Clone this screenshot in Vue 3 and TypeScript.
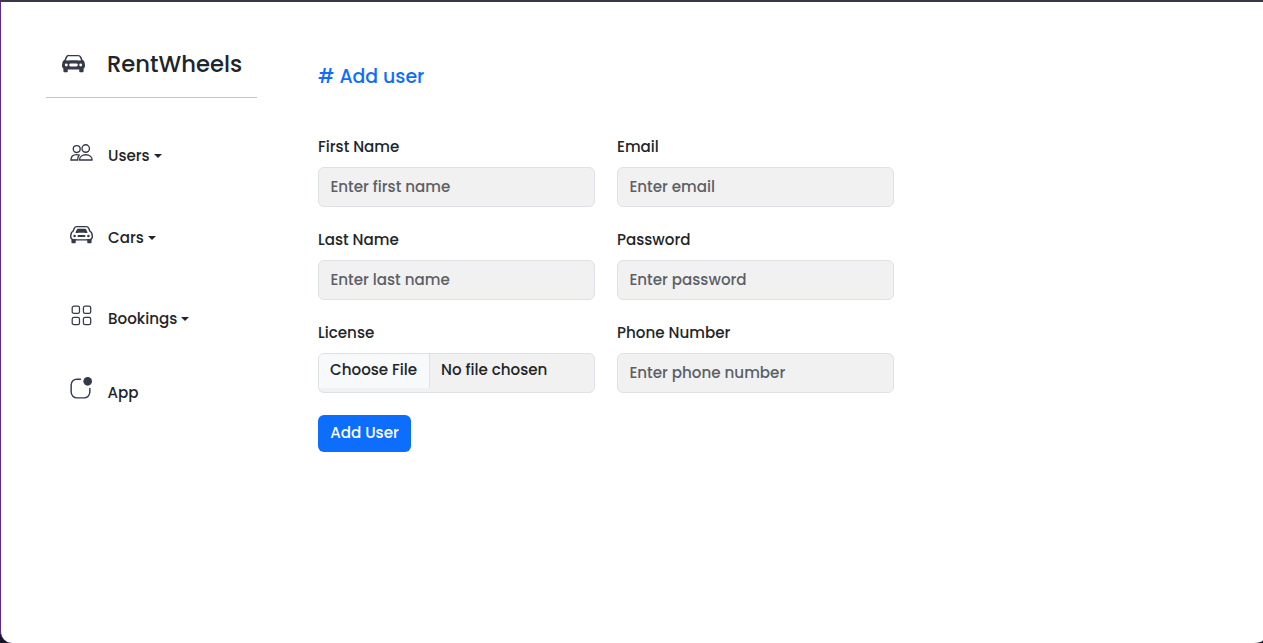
<script setup lang="ts">
import { ref } from 'vue'

interface NavItem {
  id: string
  label: string
  menu: boolean
}

interface Field {
  id: string
  label: string
  type: 'text' | 'email' | 'password' | 'file' | 'tel'
  placeholder: string
}

const navItems: NavItem[] = [
  { id: 'users', label: 'Users', menu: true },
  { id: 'cars', label: 'Cars', menu: true },
  { id: 'bookings', label: 'Bookings', menu: true },
  { id: 'app', label: 'App', menu: false },
]

const fields: Field[] = [
  { id: 'first', label: 'First Name', type: 'text', placeholder: 'Enter first name' },
  { id: 'email', label: 'Email', type: 'email', placeholder: 'Enter email' },
  { id: 'last', label: 'Last Name', type: 'text', placeholder: 'Enter last name' },
  { id: 'password', label: 'Password', type: 'password', placeholder: 'Enter password' },
  { id: 'license', label: 'License', type: 'file', placeholder: '' },
  { id: 'phone', label: 'Phone Number', type: 'tel', placeholder: 'Enter phone number' },
]

const values = ref<Record<string, string>>({})
</script>

<template>
  <div class="backdrop">
    <div class="window">
      <aside class="sidebar">
        <header class="brand">
          <svg class="brand-icon" viewBox="0 0 16 16" fill="currentColor">
            <path fill-rule="evenodd" d="M2.52 3.515A2.5 2.5 0 0 1 4.82 2h6.362c1 0 1.904.596 2.298 1.515l.792 1.848c.075.175.21.319.38.404.5.25.855.715.965 1.262l.335 1.679q.05.242.049.49v.413c0 .814-.39 1.543-1 1.997V13.5a.5.5 0 0 1-.5.5h-2a.5.5 0 0 1-.5-.5v-1.338c-1.292.048-2.745.088-4 .088s-2.708-.04-4-.088V13.5a.5.5 0 0 1-.5.5h-2a.5.5 0 0 1-.5-.5v-1.892c-.61-.454-1-1.183-1-1.997v-.413a2.5 2.5 0 0 1 .049-.49l.335-1.68c.11-.546.465-1.012.964-1.261a.8.8 0 0 0 .381-.404l.792-1.848ZM3 10a1 1 0 1 0 0-2 1 1 0 0 0 0 2m10 0a1 1 0 1 0 0-2 1 1 0 0 0 0 2M6 8a1 1 0 0 0 0 2h4a1 1 0 1 0 0-2zM2.906 5.189a.51.51 0 0 0 .497.731c.91-.073 3.35-.17 4.597-.17s3.688.097 4.597.17a.51.51 0 0 0 .497-.731l-.956-1.913A.5.5 0 0 0 11.691 3H4.309a.5.5 0 0 0-.447.276z" />
          </svg>
          <span class="brand-name">RentWheels</span>
        </header>
        <nav class="nav">
          <a v-for="item in navItems" :key="item.id" class="nav-item" :class="item.id">
            <svg v-if="item.id === 'users'" class="nav-icon" viewBox="0 0 24 24" fill="none" stroke="currentColor" stroke-width="1.4">
              <circle cx="7" cy="7.4" r="3.6" />
              <circle cx="16.4" cy="6.8" r="3.9" />
              <path d="M8 18.8H1c0-3.6 2.2-5.7 5.8-5.7 1 0 2 .2 2.8.5C8.5 15 8 16.6 8 18.8z" />
              <path d="M9.9 18.8c0-3.3 2.8-5.5 6.6-5.5s6.6 2.2 6.6 5.5z" stroke-linejoin="round" />
            </svg>
            <svg v-else-if="item.id === 'cars'" class="nav-icon" viewBox="0 0 16 16" fill="currentColor">
              <circle cx="3.2" cy="9" r="0.9" />
              <circle cx="12.8" cy="9" r="0.9" />
              <rect x="5.2" y="8.3" width="5.6" height="1.4" rx="0.7" />
              <path d="M4.862 4.276 3.906 6.19a.51.51 0 0 0 .497.731c.91-.073 2.35-.17 3.597-.17s2.688.097 3.597.17a.51.51 0 0 0 .497-.731l-.956-1.913A.5.5 0 0 0 10.691 4H5.309a.5.5 0 0 0-.447.276" />
              <path fill-rule="evenodd" d="M2.52 3.515A2.5 2.5 0 0 1 4.82 2h6.362c1 0 1.904.596 2.298 1.515l.792 1.848c.075.175.21.319.38.404.5.25.855.715.965 1.262l.335 1.679q.05.242.049.49v.413c0 .814-.39 1.543-1 1.997V13.5a.5.5 0 0 1-.5.5h-2a.5.5 0 0 1-.5-.5v-1.338c-1.292.048-2.745.088-4 .088s-2.708-.04-4-.088V13.5a.5.5 0 0 1-.5.5h-2a.5.5 0 0 1-.5-.5v-1.892c-.61-.454-1-1.183-1-1.997v-.413a2.5 2.5 0 0 1 .049-.49l.335-1.68c.11-.546.465-1.012.964-1.261a.8.8 0 0 0 .381-.404zM4.82 3a1.5 1.5 0 0 0-1.379.91l-.792 1.847a1.8 1.8 0 0 1-.853.904.8.8 0 0 0-.43.564L1.03 8.904a1.5 1.5 0 0 0-.03.294v.413c0 .796.62 1.448 1.408 1.484 1.555.07 3.786.155 5.592.155s4.037-.084 5.592-.155A1.48 1.48 0 0 0 15 9.611v-.413q0-.148-.03-.294l-.335-1.68a.8.8 0 0 0-.43-.563 1.8 1.8 0 0 1-.853-.904l-.792-1.848A1.5 1.5 0 0 0 11.18 3z" />
            </svg>
            <svg v-else-if="item.id === 'bookings'" class="nav-icon" viewBox="0 0 24 24" fill="none" stroke="currentColor" stroke-width="1.3">
              <rect x="2.3" y="2.2" width="7.6" height="7.6" rx="1.8" />
              <rect x="14" y="2.2" width="7.6" height="7.6" rx="1.8" />
              <rect x="2.3" y="13.9" width="7.6" height="7.6" rx="1.8" />
              <rect x="14" y="13.9" width="7.6" height="7.6" rx="1.8" />
            </svg>
            <svg v-else class="nav-icon" viewBox="0 0 16 16" fill="currentColor">
              <path d="M5.5 2A3.5 3.5 0 0 0 2 5.5v5A3.5 3.5 0 0 0 5.5 14h5a3.5 3.5 0 0 0 3.5-3.5V8a.5.5 0 0 1 1 0v2.5a4.5 4.5 0 0 1-4.5 4.5h-5A4.5 4.5 0 0 1 1 10.5v-5A4.5 4.5 0 0 1 5.5 1H8a.5.5 0 0 1 0 1z" />
              <path d="M16 3a3 3 0 1 1-6 0 3 3 0 0 1 6 0" />
            </svg>
            <span class="nav-label">{{ item.label }}</span>
            <span v-if="item.menu" class="caret"></span>
          </a>
        </nav>
      </aside>

      <main class="content">
        <h1 class="title"># Add user</h1>
        <form class="form" @submit.prevent>
          <div class="grid">
            <div v-for="field in fields" :key="field.id" class="field">
              <label class="label" :for="field.id">{{ field.label }}</label>
              <div v-if="field.type === 'file'" class="control file">
                <span class="file-button">Choose File</span>
                <span class="file-name">No file chosen</span>
              </div>
              <input
                v-else
                :id="field.id"
                v-model="values[field.id]"
                class="control"
                :type="field.type"
                :placeholder="field.placeholder"
              />
            </div>
          </div>
          <button class="submit" type="submit">Add User</button>
        </form>
      </main>
    </div>
  </div>
</template>

<style>
body {
  margin: 0;
  overflow: hidden;
}
</style>

<style scoped>
.backdrop {
  height: 643px;
  background: #161427;
  font-family: Poppins, Inter, 'Open Sans', sans-serif;
  font-size: 15.12px;
  font-weight: 500;
  color: #212529;
}
.backdrop *,
.backdrop {
  box-sizing: border-box;
}
.window {
  display: flex;
  height: 643px;
  background: #fff;
  border-top: 2px solid #3a3848;
  border-left: 1px solid #5b2a86;
  border-bottom-left-radius: 12px;
  border-bottom-right-radius: 9px 3px;
}
.sidebar {
  width: 256px;
  padding-left: 45px;
}
.brand {
  display: flex;
  align-items: center;
  height: 96px;
  padding: 28px 0 0 15.5px;
  border-bottom: 1px solid #c4c5c6;
}
.brand-icon {
  width: 23px;
  height: 23px;
  color: #343a48;
}
.brand-name {
  margin-left: 22.5px;
  font-size: 22.7px;
  line-height: 36px;
}
.nav {
  padding: 43px 0 0 24px;
}
.nav-item {
  display: flex;
  align-items: flex-start;
  height: 82px;
}
.cars {
  height: 81px;
}
.bookings {
  height: 74px;
}
.nav-icon {
  flex: none;
  width: 23px;
  height: 23px;
  color: #343a48;
}
.users .nav-icon {
  margin-top: 1px;
}
.app .nav-icon {
  margin: -1px 1px 0 -1px;
}
.nav-label {
  margin: 3px 0 0 15px;
  line-height: 24px;
}
.app .nav-label {
  margin-left: 14.4px;
}
.caret {
  margin: 13px 0 0 4px;
  border: 4px solid transparent;
  border-top-color: #212529;
  border-bottom: 0;
}
.content {
  padding: 60px 0 0 61px;
}
.title {
  margin: 0;
  font-size: 18.9px;
  font-weight: 500;
  line-height: 30px;
  color: #0d6efd;
}
.form {
  margin-top: 41px;
}
.grid {
  display: grid;
  grid-template-columns: 277px 277px;
  column-gap: 22px;
  row-gap: 19px;
}
.field {
  display: flex;
  flex-direction: column;
  height: 74px;
}
.label {
  height: 34px;
  line-height: 28px;
}
.control {
  width: 277px;
  height: 40px;
  margin: 0;
  padding: 0 11.4px 2px;
  border: 1px solid #dee2e6;
  border-radius: 6px;
  outline: 0;
  background: #f1f1f1;
  color: #212529;
  font: inherit;
}
.control::placeholder {
  color: #5c6066;
  opacity: 1;
}
.file {
  display: flex;
  align-items: flex-start;
  padding: 0;
  overflow: hidden;
  line-height: 32px;
}
.file-button {
  width: 111px;
  height: 34px;
  padding-left: 11px;
  border-right: 1px solid #dee2e6;
  background: #f8f9fa;
}
.file-name {
  padding-left: 11px;
}
.submit {
  display: block;
  width: 93px;
  height: 37px;
  margin-top: 22px;
  padding: 0 0 2px;
  border: 0;
  border-radius: 6px;
  background: #0d6efd;
  color: #fff;
  font: inherit;
}
</style>
